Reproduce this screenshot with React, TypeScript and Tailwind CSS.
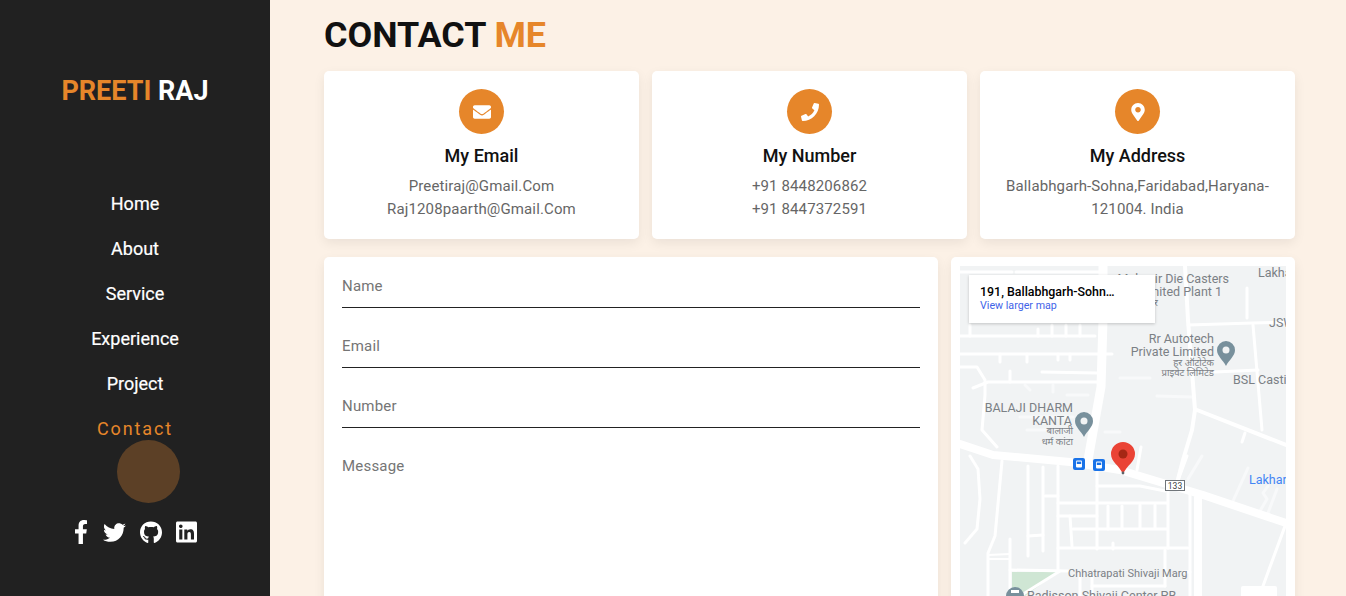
import { FaFacebookF, FaTwitter, FaGithub, FaLinkedin, FaEnvelope, FaPhone, FaMapMarkerAlt } from "react-icons/fa";

const nav = ["Home", "About", "Service", "Experience", "Project"];

const cards = [
  { icon: <FaEnvelope size={18} />, title: "My Email", lines: ["Preetiraj@Gmail.Com", "Raj1208paarth@Gmail.Com"] },
  { icon: <FaPhone size={18} />, title: "My Number", lines: ["+91 8448206862", "+91 8447372591"] },
  { icon: <FaMapMarkerAlt size={18} />, title: "My Address", lines: ["Ballabhgarh-Sohna,Faridabad,Haryana-", "121004. India"] },
];

const roads: [string, number][] = [
  ["M960 444L993 455L1070 462L1120 470L1163 483L1203 495L1286 523", 8],
  ["M1103 266L1103 320L1101 387L1088 460", 9],
  ["M1185 266L1188 320L1195 410L1192 430L1183 460L1177 483", 4],
  ["M1198 498V596", 8],
  ["M1190 494V596", 3],
  ["M1188 325L1253 323L1286 322", 3],
  ["M1215 372L1258 370", 3],
  ["M1253 325L1262 430", 3],
  ["M1197 410L1286 445", 4],
  ["M1245 433L1242 442", 3],
  ["M1247 288V318", 3],
  ["M960 272H1012M1016 272H1100", 3],
  ["M960 336H1095", 3],
  ["M970 336V325M1038 336V329M1052 336V325M1066 336V325M1080 336V325", 3],
  ["M960 354H1112", 3],
  ["M1000 354V362M1027 354V362M1058 354V360M1070 354V360", 3],
  ["M960 367H977L985 380L985 395L982 430L997 447", 3],
  ["M973 388L988 382H1097", 3],
  ["M1010 382V371", 3],
  ["M1042 372L1097 373", 3],
  ["M970 456L978 469L980 499L977 529L965 543", 3],
  ["M1002 461L995 536L988 553V596", 3],
  ["M988 555L1010 554", 2],
  ["M988 559H1010", 2],
  ["M1010 539V596", 3],
  ["M1028 466V556", 3],
  ["M1028 536L1043 535", 3],
  ["M1043 467V551", 3],
  ["M1058 466V569", 3],
  ["M1045 496H1058", 3],
  ["M1010 570L1068 571", 3],
  ["M1058 503H1167", 3],
  ["M1097 471V549", 3],
  ["M1097 486H1140L1165 491", 3],
  ["M1058 516H1097", 3],
  ["M1070 516L1072 546", 3],
  ["M1073 529H1167", 3],
  ["M1058 548L1188 548", 3],
  ["M1113 543V549", 3],
  ["M1108 506V529M1122 506V529M1140 505V528M1155 505V528", 3],
  ["M1168 491V548", 3],
  ["M1020 596L1060 571", 3],
  ["M1080 573V596", 3],
  ["M1092 576V596", 3],
  ["M1092 586H1165", 3],
  ["M1165 550V586", 3],
  ["M1183 572H1190", 3],
  ["M1285 526L1263 586", 3],
  ["M1187 456L1177 483", 3],
  ["M1141 447L1137 470", 3],
];

const faint: string[] = [
  "M1067 395H1088",
  "M1020 417H1073",
  "M1027 430H1047",
  "M1025 385L1030 390M1053 385V392",
  "M1120 378H1150",
  "M1157 396L1192 397",
  "M1233 501L1248 468",
  "M1260 511L1267 499L1263 493L1268 486",
  "M1268 513L1277 489",
  "M1188 479L1202 456",
  "M1105 432H1120",
];

function Pin({ x, y }: { x: number; y: number }) {
  return (
    <g transform={`translate(${x} ${y})`}>
      <path d="M0 16C-3 10-9 6-9 0a9 9 0 0 1 18 0C9 6 3 10 0 16Z" fill="#78909c" />
      <circle r="3.5" fill="#f1f3f4" />
    </g>
  );
}

function Bus({ x, y }: { x: number; y: number }) {
  return (
    <g transform={`translate(${x} ${y})`}>
      <rect width="12" height="12" rx="2" fill="#1a73e8" />
      <rect x="3" y="2.5" width="6" height="7" rx="1" fill="#fff" />
      <rect x="3.8" y="3.6" width="4.4" height="2.4" fill="#1a73e8" />
    </g>
  );
}

function MapDrawing() {
  const label = "#7b8085";
  return (
    <svg viewBox="960 266 326 330" className="block h-[330px] w-[326px] bg-[#f1f3f4]" style={{ fontFamily: "Roboto, sans-serif" }}>
      <path d="M1012 572H1058L1025 596L1012 588Z" fill="#cfe6d4" />
      {faint.map((d, i) => (
        <path key={i} d={d} fill="none" stroke="#f8f9fa" strokeWidth="3" strokeLinecap="round" strokeLinejoin="round" />
      ))}
      {roads.map(([d, w], i) => (
        <path key={i} d={d} fill="none" stroke="#fff" strokeWidth={w} strokeLinecap="round" strokeLinejoin="round" />
      ))}
      <g fill={label} fontSize="12.5">
        <text x="1229" y="283" textAnchor="end">Mahavir Die Casters</text>
        <text x="1222" y="296" textAnchor="end">Limited Plant 1</text>
        <text x="1258" y="277">Lakha</text>
        <text x="1269" y="327">JSW</text>
        <text x="1214" y="343" textAnchor="end">Rr Autotech</text>
        <text x="1214" y="356" textAnchor="end">Private Limited</text>
        <text x="1233" y="384">BSL Casting</text>
        <text x="1073" y="412" textAnchor="end">BALAJI DHARM</text>
        <text x="1072" y="425" textAnchor="end">KANTA</text>
        <text x="1068" y="577" fontSize="11">Chhatrapati Shivaji Marg</text>
        <text x="1027" y="600">Radisson Shivaji Center PB</text>
      </g>
      <g fill={label} fontSize="9.6" textAnchor="end" style={{ fontFamily: "'Noto Sans', sans-serif" }}>
        <text x="1158" y="306">महावीर</text>
        <text x="1214" y="366">हर ऑटोटेक</text>
        <text x="1214" y="376">प्राइवेट लिमिटेड</text>
        <text x="1073" y="434">बालाजी</text>
        <text x="1073" y="445">धर्म कांटा</text>
      </g>
      <text x="1249" y="484" fill="#4285f4" fontSize="12.5">Lakhar</text>
      <Pin x={1226} y={350} />
      <Pin x={1084} y={421} />
      <Bus x={1073} y={458} />
      <Bus x={1093} y={459} />
      <rect x="1165.5" y="480.5" width="19" height="10" fill="#fff" stroke="#70757a" />
      <text x="1175" y="489" textAnchor="middle" fontSize="8.5" fill="#3c4043">133</text>
      <path d="M1123 474C1119 465 1111 462 1111 454a12 12 0 0 1 24 0C1135 462 1127 465 1123 474Z" fill="#ea4335" />
      <circle cx="1123" cy="454" r="4.5" fill="#a52714" />
      <circle cx="1123" cy="473" r="1.4" fill="#5f6368" />
      <circle cx="1015" cy="596" r="9" fill="#78909c" />
      <rect x="1011" y="590" width="8" height="3" fill="#fff" />
    </svg>
  );
}

export default function App() {
  return (
    <div className="flex h-[596px] w-full overflow-hidden bg-[#fcf1e6] font-['Roboto',sans-serif]">
      <aside className="relative flex h-full w-[270px] shrink-0 flex-col items-center bg-[#212121]">
        <h1 className="mt-[73px] text-[27px] font-bold leading-[36px] text-white">
          <span className="text-[#e6862a]">PREETI</span> RAJ
        </h1>
        <nav className="mt-[82px] flex flex-col items-center gap-[19px]">
          {nav.map((n) => (
            <a key={n} className="text-[18px] leading-[26px] text-white [-webkit-text-stroke:0.2px_white]">{n}</a>
          ))}
          <a className="text-[18px] leading-[26px] tracking-[1.9px] text-[#e6862a]">Contact</a>
        </nav>
        <div className="absolute left-[117px] top-[440px] h-[63px] w-[63px] rounded-full bg-[#5c4026]" />
        <div className="absolute left-[74px] top-[520px] flex h-[24px] items-center text-white">
          <FaFacebookF className="h-[24px] w-[14px]" preserveAspectRatio="none" />
          <FaTwitter className="ml-[15px] h-[23px] w-[23px]" />
          <FaGithub className="ml-[14px] h-[23px] w-[22px]" />
          <FaLinkedin className="ml-[14px] h-[24px] w-[21px]" />
        </div>
      </aside>

      <main className="min-w-0 flex-1 pl-[54px] pr-[51px]">
        <h2 className="mt-[13px] text-[35.9px] font-bold leading-[44px] text-[#111]">
          CONTACT <span className="text-[#e6862a]">ME</span>
        </h2>
        <div className="mt-[14px] grid grid-cols-3 gap-[13px]">
          {cards.map((c) => (
            <div key={c.title} className="flex h-[168px] flex-col items-center rounded-[5px] bg-white pt-[18px] shadow-[0_4px_12px_rgba(0,0,0,0.07)]">
              <div className="flex h-[45px] w-[45px] items-center justify-center rounded-full bg-[#e6862a] text-white">{c.icon}</div>
              <h3 className="mt-[10px] text-[18px] font-medium leading-[24px] text-[#111]">{c.title}</h3>
              <div className="mt-[7px] text-center text-[15px] leading-[23px] tracking-[0.13px] text-[#666]">
                {c.lines.map((l) => (
                  <p key={l}>{l}</p>
                ))}
              </div>
            </div>
          ))}
        </div>
        <div className="mt-[18px] flex gap-[13px]">
          <form className="h-[400px] w-[614px] rounded-[5px] bg-white px-[18px] pt-[9px] shadow-[0_4px_12px_rgba(0,0,0,0.07)]">
            {["Name", "Email", "Number"].map((p) => (
              <input key={p} placeholder={p} className="mb-[18px] block h-[42px] w-full border-b border-[#222] pb-[2px] text-[15px] tracking-[0.2px] outline-none placeholder:text-[#757575]" />
            ))}
            <textarea placeholder="Message" className="block h-[200px] w-full resize-none pt-[9px] text-[15px] tracking-[0.2px] outline-none placeholder:text-[#757575]" />
          </form>
          <div className="relative h-[400px] w-[344px] rounded-[5px] bg-white p-[9px] shadow-[0_4px_12px_rgba(0,0,0,0.07)]">
            <MapDrawing />
            <div className="absolute left-[18px] top-[18px] h-[48px] w-[186px] bg-white px-[11px] pt-[9px] shadow-[0_1px_3px_rgba(0,0,0,0.2)]">
              <div className="text-[12.4px] font-medium leading-[15px] text-black">191, Ballabhgarh-Sohn…</div>
              <div className="text-[10.7px] leading-[13px] text-[#3f63e8]">View larger map</div>
            </div>
            <div className="absolute left-[290px] top-[329px] h-[40px] w-[36px] rounded-[2px] bg-white" />
          </div>
        </div>
      </main>
    </div>
  );
}
